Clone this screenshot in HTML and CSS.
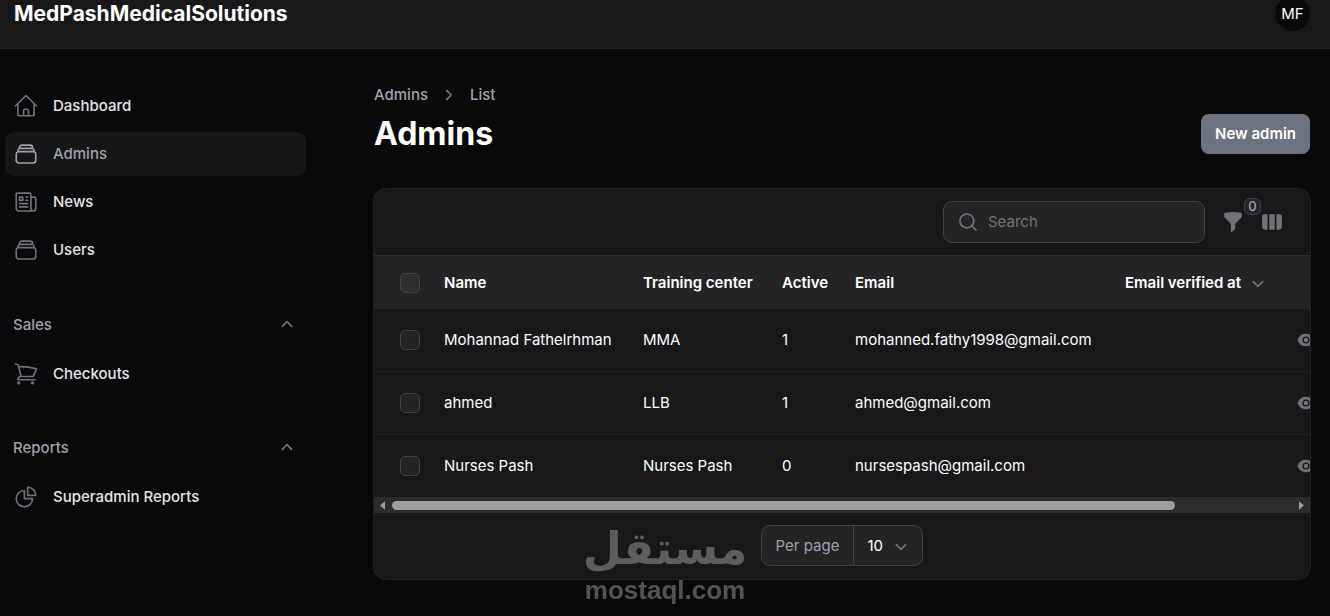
FILE: index.html
```html
<!DOCTYPE html>
<html lang="en">
<head>
    <meta charset="UTF-8">
    <meta name="viewport" content="width=device-width, initial-scale=1.0">
    <title>Admins - MedPashMedicalSolutions</title>
    <link rel="stylesheet" href="styles.css">
</head>
<body>
    <svg class="icon-defs" aria-hidden="true">
        <symbol id="icon-stack" viewBox="0 0 24 24">
            <path d="M6 6.878V6a2.25 2.25 0 0 1 2.25-2.25h7.5A2.25 2.25 0 0 1 18 6v.878m-12 0c.235-.083.487-.128.75-.128h10.5c.263 0 .515.045.75.128m-12 0A2.25 2.25 0 0 0 4.5 9v.878m13.5-3A2.25 2.25 0 0 1 19.5 9v.878m0 0a2.246 2.246 0 0 0-.75-.128H5.25c-.263 0-.515.045-.75.128m15 0A2.25 2.25 0 0 1 21 12v6a2.25 2.25 0 0 1-2.25 2.25H5.25A2.25 2.25 0 0 1 3 18v-6c0-.98.626-1.813 1.5-2.122"/>
        </symbol>
        <symbol id="icon-up" viewBox="0 0 20 20">
            <path d="M5.75 11.25 10 7l4.25 4.25"/>
        </symbol>
        <symbol id="icon-down" viewBox="0 0 20 20">
            <path d="M5.75 8.75 10 13l4.25-4.25"/>
        </symbol>
        <symbol id="icon-eye" viewBox="0 0 20 20">
            <path d="M10 12.5a2.5 2.5 0 1 0 0-5 2.5 2.5 0 0 0 0 5Z"/>
            <path fill-rule="evenodd" d="M.664 10.59a1.651 1.651 0 0 1 0-1.186A10.004 10.004 0 0 1 10 3c4.257 0 7.893 2.66 9.336 6.41.147.381.146.804 0 1.186A10.004 10.004 0 0 1 10 17c-4.257 0-7.893-2.66-9.336-6.41ZM14 10a4 4 0 1 1-8 0 4 4 0 0 1 8 0Z"/>
        </symbol>
    </svg>

    <header class="topbar">
        <a href="#" class="brand">MedPashMedicalSolutions</a>
        <button type="button" class="avatar" aria-label="User menu">MF</button>
    </header>

    <div class="layout">
        <nav class="sidebar">
            <div class="nav-group">
                <a href="#" class="nav-item">
                    <svg class="nav-icon" viewBox="0 0 24 24"><path d="m2.25 12 8.954-8.955c.44-.439 1.152-.439 1.591 0L21.75 12M4.5 9.75v10.125c0 .621.504 1.125 1.125 1.125H9.75v-4.875c0-.621.504-1.125 1.125-1.125h2.25c.621 0 1.125.504 1.125 1.125V21h4.125c.621 0 1.125-.504 1.125-1.125V9.75M8.25 21h8.25"/></svg>
                    <span>Dashboard</span>
                </a>
                <a href="#" class="nav-item active">
                    <svg class="nav-icon"><use href="#icon-stack"/></svg>
                    <span>Admins</span>
                </a>
                <a href="#" class="nav-item">
                    <svg class="nav-icon" viewBox="0 0 24 24"><path d="M12 7.5h1.5m-1.5 3h1.5m-7.5 3h7.5m-7.5 3h7.5m3-9h3.375c.621 0 1.125.504 1.125 1.125V18a2.25 2.25 0 0 1-2.25 2.25M16.5 7.5V18a2.25 2.25 0 0 0 2.25 2.25M16.5 7.5V4.875c0-.621-.504-1.125-1.125-1.125H4.125C3.504 3.75 3 4.254 3 4.875V18a2.25 2.25 0 0 0 2.25 2.25h13.5M6 7.5h3v3H6v-3Z"/></svg>
                    <span>News</span>
                </a>
                <a href="#" class="nav-item">
                    <svg class="nav-icon"><use href="#icon-stack"/></svg>
                    <span>Users</span>
                </a>
            </div>
            <div class="nav-group">
                <button type="button" class="nav-heading">
                    <span>Sales</span>
                    <svg class="chevron"><use href="#icon-up"/></svg>
                </button>
                <a href="#" class="nav-item">
                    <svg class="nav-icon" viewBox="0 0 24 24"><path d="M2.25 3h1.386c.51 0 .955.343 1.087.835l.383 1.437M7.5 14.25a3 3 0 0 0-3 3h15.75m-12.75-3h11.218c1.121-2.3 2.1-4.684 2.924-7.138a60.114 60.114 0 0 0-16.536-1.84M7.5 14.25 5.106 5.272M6 20.25a.75.75 0 1 1-1.5 0 .75.75 0 0 1 1.5 0Zm12.75 0a.75.75 0 1 1-1.5 0 .75.75 0 0 1 1.5 0Z"/></svg>
                    <span>Checkouts</span>
                </a>
            </div>
            <div class="nav-group">
                <button type="button" class="nav-heading">
                    <span>Reports</span>
                    <svg class="chevron"><use href="#icon-up"/></svg>
                </button>
                <a href="#" class="nav-item">
                    <svg class="nav-icon" viewBox="0 0 24 24"><path d="M10.5 6a7.5 7.5 0 1 0 7.5 7.5h-7.5V6Z"/><path d="M13.5 10.5H21A7.5 7.5 0 0 0 13.5 3v7.5Z"/></svg>
                    <span>Superadmin Reports</span>
                </a>
            </div>
        </nav>

        <main class="main">
            <div class="page-header">
                <div class="heading">
                    <nav class="breadcrumbs" aria-label="Breadcrumb">
                        <a href="#">Admins</a>
                        <svg class="chevron" viewBox="0 0 20 20"><path d="M8 6l4 4-4 4"/></svg>
                        <a href="#">List</a>
                    </nav>
                    <h1>Admins</h1>
                </div>
                <button type="button" class="btn">New admin</button>
            </div>

            <section class="card">
                <div class="toolbar">
                    <label class="search">
                        <svg class="solid-icon" viewBox="0 0 20 20"><path fill-rule="evenodd" d="M9 3.5a5.5 5.5 0 1 0 0 11 5.5 5.5 0 0 0 0-11ZM2 9a7 7 0 1 1 12.452 4.391l3.328 3.329a.75.75 0 1 1-1.06 1.06l-3.329-3.328A7 7 0 0 1 2 9Z"/></svg>
                        <input type="search" placeholder="Search" aria-label="Search">
                    </label>
                    <button type="button" class="icon-btn" aria-label="Filter">
                        <svg class="solid-icon" viewBox="0 0 20 20"><path d="M2.628 1.601C5.028 1.206 7.49 1 10 1s4.973.206 7.372.601a.75.75 0 0 1 .628.74v2.288a2.25 2.25 0 0 1-.659 1.59l-4.682 4.683a2.25 2.25 0 0 0-.659 1.59v3.037c0 .684-.31 1.33-.844 1.757l-1.937 1.55A.75.75 0 0 1 8 18.25v-5.757a2.25 2.25 0 0 0-.659-1.591L2.659 6.22A2.25 2.25 0 0 1 2 4.629V2.34a.75.75 0 0 1 .628-.74Z"/></svg>
                        <span class="badge">0</span>
                    </button>
                    <button type="button" class="icon-btn" aria-label="Toggle columns">
                        <svg class="solid-icon" viewBox="0 0 20 20"><path d="M14 17h2.75A2.25 2.25 0 0 0 19 14.75v-9.5A2.25 2.25 0 0 0 16.75 3H14v14ZM12.5 3h-5v14h5V3ZM3.25 3H6v14H3.25A2.25 2.25 0 0 1 1 14.75v-9.5A2.25 2.25 0 0 1 3.25 3Z"/></svg>
                    </button>
                </div>

                <div class="table-wrap">
                    <table>
                        <colgroup>
                            <col class="col-check">
                            <col class="col-name">
                            <col class="col-center">
                            <col class="col-active">
                            <col class="col-email">
                            <col class="col-verified">
                            <col class="col-actions">
                        </colgroup>
                        <thead>
                            <tr>
                                <th class="check"><input type="checkbox" aria-label="Select all"></th>
                                <th>Name</th>
                                <th>Training center</th>
                                <th>Active</th>
                                <th>Email</th>
                                <th>
                                    <button type="button" class="sort">
                                        Email verified at
                                        <svg class="chevron"><use href="#icon-down"/></svg>
                                    </button>
                                </th>
                                <th></th>
                            </tr>
                        </thead>
                        <tbody>
                            <tr>
                                <td class="check"><input type="checkbox" aria-label="Select Mohannad Fathelrhman"></td>
                                <td>Mohannad Fathelrhman</td>
                                <td>MMA</td>
                                <td>1</td>
                                <td>mohanned.fathy1998@gmail.com</td>
                                <td></td>
                                <td><a href="#" class="view" aria-label="View"><svg><use href="#icon-eye"/></svg></a></td>
                            </tr>
                            <tr>
                                <td class="check"><input type="checkbox" aria-label="Select ahmed"></td>
                                <td>ahmed</td>
                                <td>LLB</td>
                                <td>1</td>
                                <td>ahmed@gmail.com</td>
                                <td></td>
                                <td><a href="#" class="view" aria-label="View"><svg><use href="#icon-eye"/></svg></a></td>
                            </tr>
                            <tr>
                                <td class="check"><input type="checkbox" aria-label="Select Nurses Pash"></td>
                                <td>Nurses Pash</td>
                                <td>Nurses Pash</td>
                                <td>0</td>
                                <td>nursespash@gmail.com</td>
                                <td></td>
                                <td><a href="#" class="view" aria-label="View"><svg><use href="#icon-eye"/></svg></a></td>
                            </tr>
                        </tbody>
                    </table>
                </div>
                <div class="scrollbar" aria-hidden="true">
                    <svg class="arrow" viewBox="0 0 6 10"><path d="M6 0v10L0 5Z"/></svg>
                    <div class="track"><div class="thumb"></div></div>
                    <svg class="arrow" viewBox="0 0 6 10"><path d="M0 0v10l6-5Z"/></svg>
                </div>

                <div class="pagination">
                    <div class="per-page">
                        <label for="per-page">Per page</label>
                        <div class="select">
                            <select id="per-page">
                                <option>5</option>
                                <option selected>10</option>
                                <option>25</option>
                                <option>50</option>
                            </select>
                            <svg class="chevron"><use href="#icon-down"/></svg>
                        </div>
                    </div>
                </div>
            </section>
        </main>
    </div>

    <div class="watermark">
        <span class="watermark-ar" lang="ar" dir="rtl">مستقل</span>
        <span class="watermark-en">mostaql.com</span>
    </div>
</body>
</html>
```
FILE: styles.css
```css
* {
    box-sizing: border-box;
}
body {
    margin: 0;
    min-height: 100vh;
    overflow: hidden;
    font-family: Inter, "Liberation Sans", sans-serif;
    font-size: 15px;
    line-height: 22px;
    background: #09090b;
    color: #fff;
}
a {
    color: inherit;
    text-decoration: none;
}
button, input, select {
    font: inherit;
    color: inherit;
}
button {
    padding: 0;
    border: none;
    background: none;
    cursor: pointer;
}
.icon-defs {
    display: none;
}

/* Top bar */
.topbar {
    display: flex;
    align-items: center;
    justify-content: space-between;
    height: 70px;
    margin-top: -21px;
    padding: 0 20px 0 14px;
    background: #18181b;
    border-bottom: 1px solid #232326;
}
.brand {
    font-size: 21px;
    font-weight: 700;
}
.avatar {
    width: 35px;
    height: 35px;
    border-radius: 50%;
    background: #09090b;
}

.layout {
    display: grid;
    grid-template-columns: 306px minmax(0, 1fr);
}

/* Sidebar */
.sidebar {
    display: flex;
    flex-direction: column;
    gap: 30px;
    padding: 35px 0 0 5px;
}
.nav-group {
    display: flex;
    flex-direction: column;
    gap: 4px;
}
.nav-group + .nav-group {
    gap: 5px;
}
.nav-group:first-child {
    margin-bottom: 1px;
}
.nav-item, .nav-heading {
    display: flex;
    align-items: center;
    height: 44px;
    padding: 0 8px;
    border-radius: 9px;
    font-weight: 500;
}
.nav-item {
    gap: 14px;
    color: #e4e4e7;
}
.nav-item.active {
    background: #161618;
    color: #9ca3af;
}
.nav-heading {
    justify-content: space-between;
    color: #a1a1aa;
}
.nav-icon {
    width: 26px;
    height: 26px;
    fill: none;
    stroke: #71717a;
    stroke-width: 1.5;
    stroke-linecap: round;
    stroke-linejoin: round;
}
.active .nav-icon {
    stroke: #9ca3af;
}
.chevron {
    width: 22px;
    height: 22px;
    fill: none;
    stroke: #71717a;
    stroke-width: 1.5;
    stroke-linecap: round;
    stroke-linejoin: round;
}

/* Page header */
.main {
    padding: 35px 19px 36px 67px;
}
.page-header {
    display: flex;
    align-items: flex-end;
    justify-content: space-between;
    margin-bottom: 34px;
    padding: 0 1px;
}
.heading {
    display: flex;
    flex-direction: column;
    gap: 8px;
}
.breadcrumbs {
    display: flex;
    align-items: center;
    gap: 10px;
    font-weight: 500;
    color: #a1a1aa;
}
h1 {
    margin: 0;
    font-size: 32px;
    line-height: 40px;
    font-weight: 700;
}
.btn {
    padding: 9px 14px;
    border-radius: 8px;
    background: #6b7280;
    font-weight: 600;
}

/* Table card */
.card {
    border: 1px solid #232326;
    border-radius: 13px;
    background: #18181b;
    overflow: hidden;
}
.toolbar {
    display: flex;
    align-items: center;
    justify-content: flex-end;
    gap: 17px;
    padding: 12px 27px 12px 26px;
}
.search {
    display: flex;
    align-items: center;
    gap: 9px;
    width: 262px;
    height: 42px;
    padding: 0 13px;
    border: 1px solid #424245;
    border-radius: 9px;
    background: #242427;
}
.search input {
    flex: 1;
    min-width: 0;
    padding: 0;
    border: none;
    outline: none;
    background: none;
}
.search input::placeholder {
    color: #71717a;
}
.solid-icon {
    display: block;
    flex: none;
    width: 22px;
    height: 22px;
    fill: #71717a;
}
.icon-btn {
    position: relative;
}
.badge {
    position: absolute;
    top: -13px;
    right: -17px;
    width: 17px;
    border: 1px solid #424245;
    border-radius: 6px;
    background: #242427;
    color: #9ca3af;
    font-size: 13px;
    line-height: 15px;
    font-weight: 500;
}
.table-wrap {
    overflow-x: auto;
    scrollbar-width: none;
    border-top: 1px solid #2f2f32;
}
table {
    width: 1067px;
    min-width: 100%;
    table-layout: fixed;
    border-spacing: 0;
    white-space: nowrap;
}
.col-check { width: 57px; }
.col-name { width: 199px; }
.col-center { width: 139px; }
.col-active { width: 73px; }
.col-email { width: 270px; }
.col-verified { width: 172px; }
th, td {
    padding: 0 13px;
    text-align: left;
}
th {
    height: 53px;
    background: #242427;
    font-weight: 600;
}
td {
    height: 62px;
}
tbody tr + tr td {
    height: 63px;
    border-top: 1px solid #232326;
}
.check {
    padding-left: 26px;
    padding-right: 0;
}
input[type="checkbox"] {
    appearance: none;
    display: block;
    width: 20px;
    height: 20px;
    margin: 0;
    border: 1px solid #424245;
    border-radius: 5px;
    background: #242427;
}
th input[type="checkbox"] {
    background: #2e2e31;
}
.sort {
    display: flex;
    align-items: center;
    gap: 6px;
}
.view svg {
    display: block;
    width: 18px;
    height: 18px;
    fill: #71717a;
}
.scrollbar {
    display: flex;
    align-items: center;
    gap: 7px;
    height: 16px;
    padding: 0 6px;
    background: #2c2c2c;
}
.arrow {
    width: 5px;
    height: 9px;
    fill: #9f9f9f;
}
.track {
    flex: 1;
}
.thumb {
    width: 87%;
    height: 9px;
    border-radius: 5px;
    background: #9f9f9f;
}

/* Pagination */
.pagination {
    display: flex;
    justify-content: center;
    padding: 12px 26px 13px;
}
.per-page {
    display: flex;
    height: 41px;
    border: 1px solid #424245;
    border-radius: 9px;
    background: #242427;
}
.per-page label {
    padding: 9px 14px;
    border-right: 1px solid #424245;
    color: #9ca3af;
}
.select {
    display: grid;
    align-items: center;
}
.select select, .select .chevron {
    grid-area: 1 / 1;
}
.select select {
    appearance: none;
    height: 100%;
    padding: 0 36px 0 13px;
    border: none;
    background: none;
}
.select .chevron {
    justify-self: end;
    margin-right: 10px;
    pointer-events: none;
}

/* Watermark over the page */
.watermark {
    position: fixed;
    left: 50%;
    bottom: 12px;
    transform: translateX(-50%);
    display: flex;
    flex-direction: column;
    align-items: center;
    color: #fff;
    font-weight: 700;
    opacity: 0.3;
    pointer-events: none;
}
.watermark-ar {
    font-family: "DejaVu Sans", sans-serif;
    font-size: 45px;
    line-height: 54px;
}
.watermark-en {
    font-family: "Liberation Sans", sans-serif;
    font-size: 26px;
    line-height: 28px;
}
```
